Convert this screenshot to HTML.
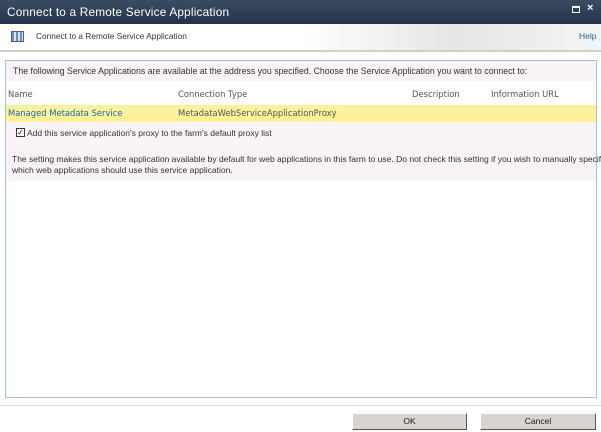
<!DOCTYPE html>
<html><head><style>
*{margin:0;padding:0;box-sizing:border-box}
body{width:601px;height:432px;overflow:hidden;background:#fff;font-family:"Liberation Sans",Tahoma,sans-serif;font-size:8px;color:#333;position:relative}
.tb{position:absolute;left:0;top:0;width:601px;height:24px;background:linear-gradient(#3b4c63,#21324a);color:#fff;font-size:11.8px;padding:5px 0 0 7px;letter-spacing:0.2px}
.hd{position:absolute;left:0;top:24px;width:601px;height:28px;background:linear-gradient(90deg,#fff 50%,#e6e6e6 75%,#f4f4f4);border-bottom:2px solid #cfcfcf}
.panel{position:absolute;left:5px;top:60px;width:592px;height:338px;border:1px solid #a5bfdc;background:#fff}
.a{position:absolute;white-space:nowrap}
.c{font-family:"DejaVu Sans",Verdana,sans-serif;font-size:8.4px}
.btn{position:absolute;top:413px;height:17px;background:#d8d4cf;border:1px solid #fff;border-right-color:#555;border-bottom-color:#555;text-align:center;font-size:8.5px;color:#222;line-height:15px}
</style></head><body>
<div class="tb">Connect to a Remote Service Application</div>
<div class="a" style="left:572px;top:6px;width:8px;height:7px;border:1px solid #fff;border-top-width:2px"></div>
<div class="a" style="left:587px;top:2px;color:#fff;font-size:11px;font-weight:bold">×</div>
<div class="hd"></div>
<div class="a" style="left:11px;top:31px;width:13px;height:11px;background:linear-gradient(90deg,#6d8bc0 0 2px,#dde6f3 2px 4px,#6d8bc0 4px 6px,#dde6f3 6px 8px,#6d8bc0 8px 10px,#dde6f3 10px 11px,#6d8bc0 11px);border:1px solid #44609a"></div>
<div class="a" style="left:36px;top:31px;font-size:8.3px;color:#333">Connect to a Remote Service Application</div>
<div class="a" style="left:579px;top:31px;font-size:8.5px;color:#1f5f9e">Help</div>
<div class="panel">
 <div class="a" style="left:0;top:0;width:590px;height:20px;background:#f7f3f7"></div>
 <div class="a" style="left:7px;top:5px;font-size:8.75px">The following Service Applications are available at the address you specified. Choose the Service Application you want to connect to:</div>
 <div class="a c" style="left:2px;top:28px;color:#555">Name</div>
 <div class="a c" style="left:172px;top:28px;color:#555">Connection Type</div>
 <div class="a c" style="left:406px;top:28px;color:#555">Description</div>
 <div class="a c" style="left:485px;top:28px;color:#555">Information URL</div>
 <div class="a" style="left:0;top:44px;width:590px;height:17px;background:#fbf29b"></div>
 <div class="a c" style="left:2px;top:47px;color:#1a6aa8">Managed Metadata Service</div>
 <div class="a c" style="left:172px;top:47px;color:#555">MetadataWebServiceApplicationProxy</div>
 <div class="a" style="left:0;top:61px;width:590px;height:59px;background:#f7f3f7"></div>
 <div class="a" style="left:10px;top:67px;width:9px;height:9px;border:1px solid #333;background:#fff;font-size:8px;line-height:7px;text-align:center;color:#000">✓</div>
 <div class="a" style="left:21px;top:67px;font-size:8.5px">Add this service application's proxy to the farm's default proxy list</div>
 <div class="a" style="left:6px;top:93px;font-size:8.5px;line-height:11px">The setting makes this service application available by default for web applications in this farm to use. Do not check this setting if you wish to manually specify<br>which web applications should use this service application.</div>
</div>
<div class="a" style="left:0;top:405px;width:601px;height:1px;background:#dcdcdc"></div>
<div class="btn" style="left:352px;width:115px">OK</div>
<div class="btn" style="left:480px;width:116px">Cancel</div>
</body></html>
